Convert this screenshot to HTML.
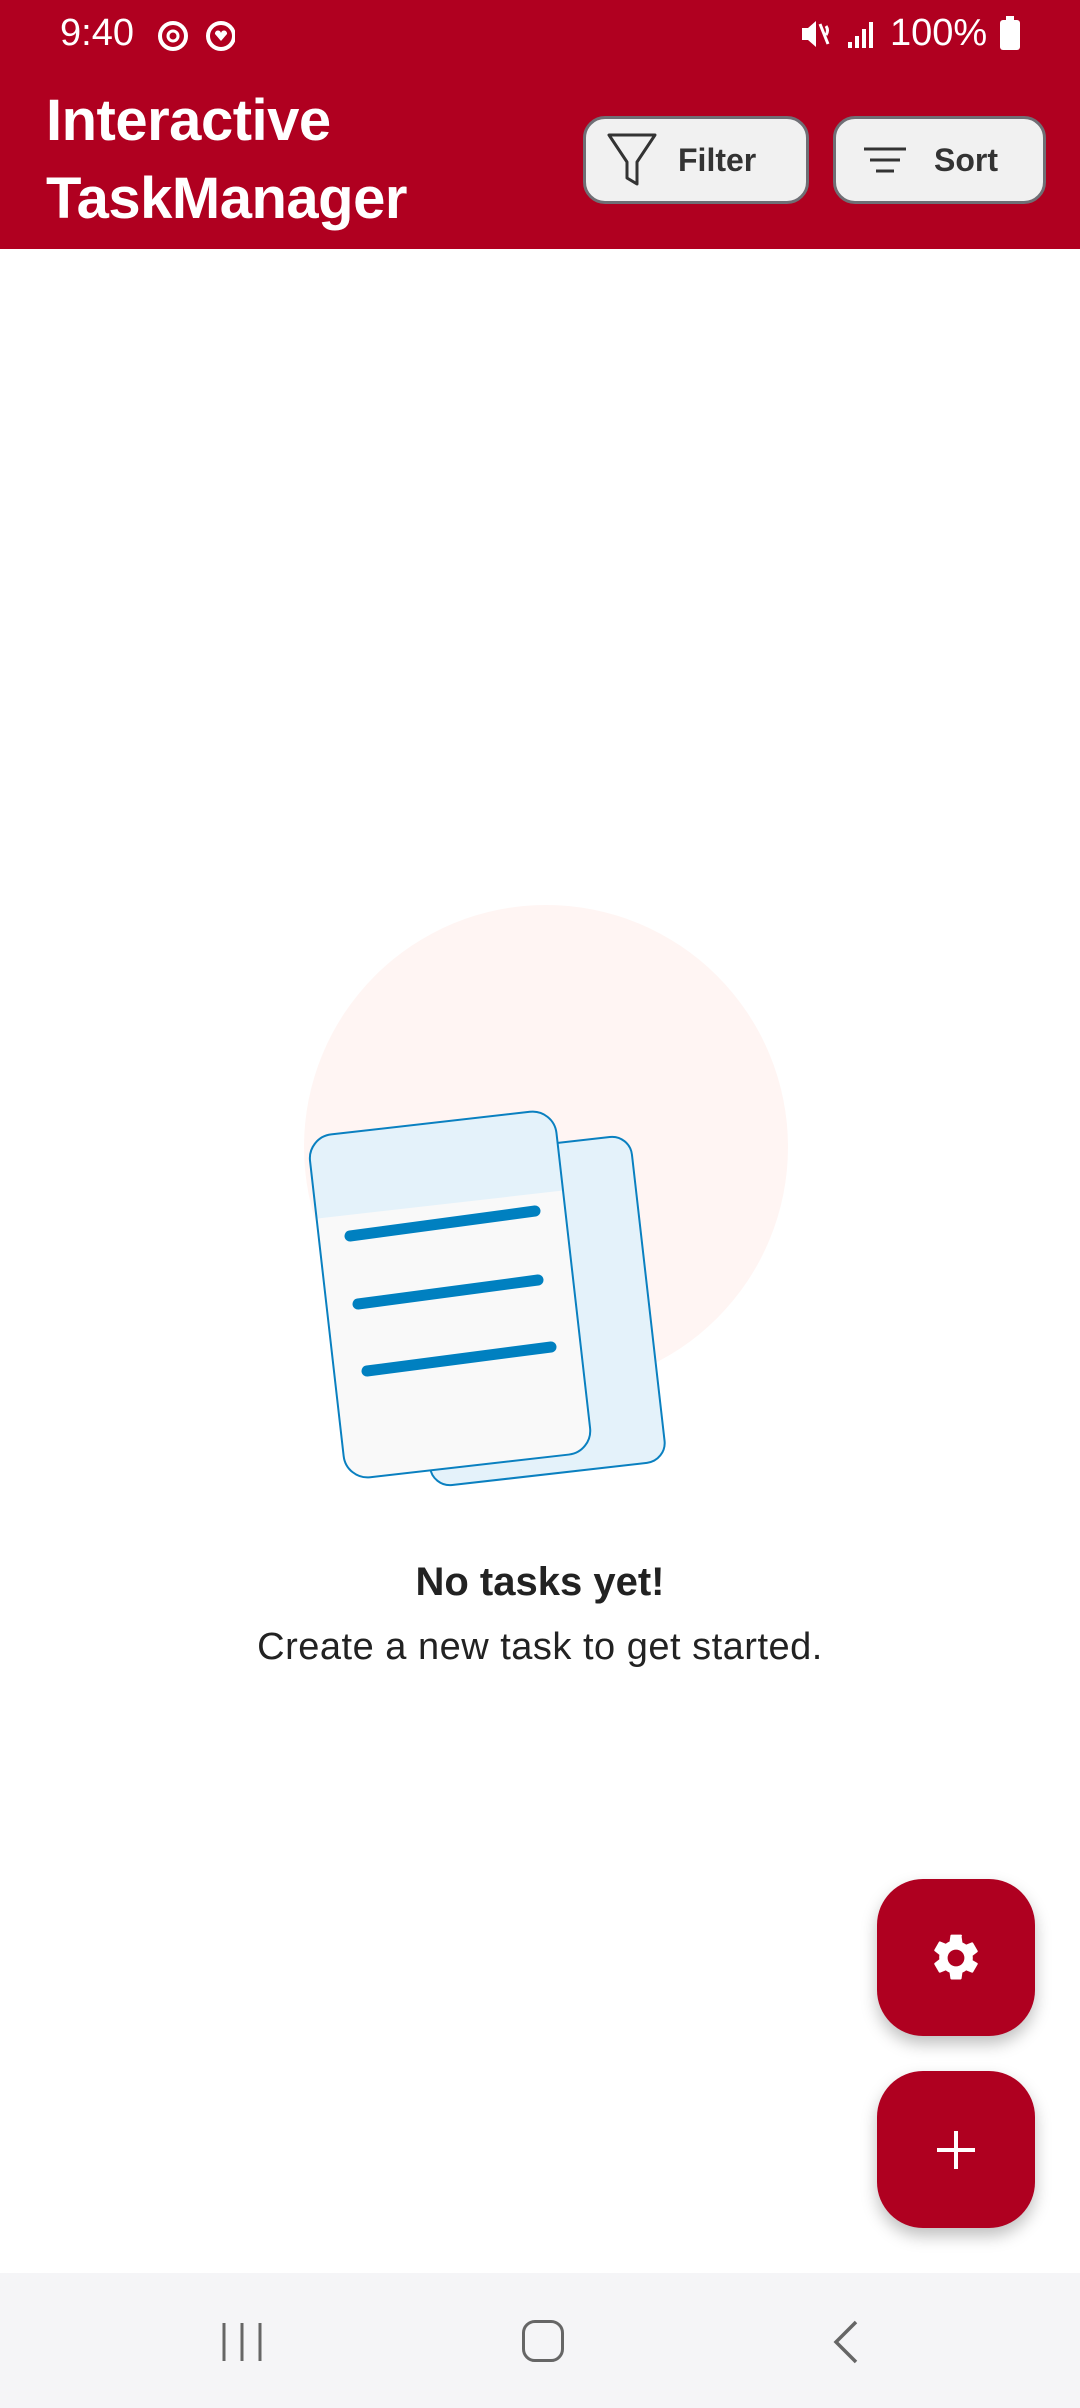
<!DOCTYPE html>
<html><head><meta charset="utf-8"><style>
*{margin:0;padding:0;box-sizing:border-box}
body{width:1080px;height:2408px;position:relative;background:#fff;font-family:"Liberation Sans",sans-serif;overflow:hidden}
.hdr{position:absolute;left:0;top:0;width:1080px;height:249px;background:#B00020}
.st{position:absolute;top:12px;color:#fff;font-size:38px}
.title{position:absolute;left:46px;top:82px;color:#fff;font-size:58px;font-weight:bold;line-height:78px;letter-spacing:-0.5px}
.btn{position:absolute;top:116px;height:88px;background:#f1f1f1;border:3px solid #6f6f75;border-radius:22px;color:#333;font-size:32px;font-weight:bold;display:flex;align-items:center}
.fab{position:absolute;left:877px;width:158px;height:157px;background:#AF0020;border-radius:46px;box-shadow:0 8px 16px rgba(0,0,0,.25);display:flex;align-items:center;justify-content:center}
.nav{position:absolute;left:0;top:2273px;width:1080px;height:135px;background:#f5f5f7}
</style></head><body>
<div class="hdr">
<div class="st" style="left:60px">9:40</div>
<svg style="position:absolute;left:155px;top:18px" width="80" height="36" viewBox="0 0 80 36"><circle cx="18" cy="18" r="13" fill="none" stroke="#fff" stroke-width="4"/><circle cx="18" cy="18" r="5" fill="none" stroke="#fff" stroke-width="3"/><circle cx="66" cy="18" r="13" fill="none" stroke="#fff" stroke-width="4"/><path d="M60 16a3 3 0 0 1 6-1a3 3 0 0 1 6 1l-6 7z" fill="#fff"/></svg>
<svg style="position:absolute;left:800px;top:16px" width="90" height="36" viewBox="0 0 90 36"><path d="M2 12h6l8-7v26l-8-7H2z" fill="#fff"/><path d="M20 8l8 20M26 10c2 3 2 6 0 9" stroke="#fff" stroke-width="3" fill="none"/><rect x="48" y="26" width="4" height="6" fill="#fff"/><rect x="55" y="20" width="4" height="12" fill="#fff"/><rect x="62" y="13" width="4" height="19" fill="#fff"/><rect x="69" y="6" width="4" height="26" fill="#fff"/></svg>
<div class="st" style="left:890px">100%</div>
<div style="position:absolute;left:1000px;top:20px;width:20px;height:30px;background:#fff;border-radius:3px"></div>
<div style="position:absolute;left:1006px;top:16px;width:8px;height:5px;background:#fff"></div>
<div class="title">Interactive<br>TaskManager</div>
<div class="btn" style="left:583px;width:226px"><svg style="margin-left:20px" width="52" height="56" viewBox="0 0 52 56"><path d="M3 3h46L31 30v22l-10-6V30z" fill="none" stroke="#333" stroke-width="3" stroke-linejoin="round"/></svg><span style="margin-left:20px">Filter</span></div>
<div class="btn" style="left:833px;width:213px"><svg style="margin-left:26px" width="46" height="30" viewBox="0 0 46 30"><path d="M2 4h42M8 15h30M14 26h18" stroke="#333" stroke-width="3"/></svg><span style="margin-left:26px">Sort</span></div>
</div>
<svg style="position:absolute;left:0;top:0" width="1080" height="1600">
<circle cx="546" cy="1147" r="242" fill="#FFF5F3"/>
<g transform="rotate(-6.5 531 1311)"><rect x="413" y="1147" width="236" height="328" rx="20" fill="#E4F2FA" stroke="#0A80C0" stroke-width="2"/></g>
<g transform="rotate(-6.5 450 1294)">
<clipPath id="c"><rect x="326" y="1122" width="248" height="345" rx="24"/></clipPath>
<rect x="326" y="1122" width="248" height="345" rx="24" fill="#F9F9F9"/>
<rect x="326" y="1122" width="248" height="82" fill="#E4F2FA" clip-path="url(#c)"/>
<rect x="326" y="1122" width="248" height="345" rx="24" fill="none" stroke="#0A80C0" stroke-width="2"/>
</g>
<g stroke="#0080C0" stroke-width="11" stroke-linecap="round"><path d="M350 1236L535 1211M358 1304L538 1280M367 1371L551 1347"/></g>
</svg>
<div style="position:absolute;left:0;width:1080px;top:1560px;text-align:center;font-size:40px;font-weight:bold;color:#222">No tasks yet!</div>
<div style="position:absolute;left:0;width:1080px;top:1626px;text-align:center;font-size:38px;color:#222;letter-spacing:0.5px">Create a new task to get started.</div>
<div class="fab" style="top:1879px"><svg width="56" height="56" viewBox="0 0 24 24"><path fill="#fff" d="M19.14 12.94c.04-.3.06-.61.06-.94s-.02-.64-.07-.94l2.03-1.58a.49.49 0 0 0 .12-.61l-1.920-3.32a.49.49 0 0 0-.59-.22l-2.39.96c-.5-.38-1.03-.7-1.62-.94l-.36-2.54A.48.48 0 0 0 13.92 2h-3.84c-.24 0-.43.17-.47.41l-.36 2.54c-.59.24-1.130.57-1.620.94l-2.39-.96a.49.49 0 0 0-.59.22L2.74 8.47c-.12.21-.08.47.12.61l2.03 1.58c-.05.3-.09.63-.09.94s.02.64.07.94l-2.03 1.58a.49.49 0 0 0-.12.61l1.92 3.32c.12.22.37.29.59.22l2.39-.96c.5.38 1.03.7 1.62.94l.36 2.54c.05.24.24.41.48.41h3.84c.24 0 .44-.17.47-.41l.36-2.54c.59-.24 1.13-.56 1.62-.94l2.39.96c.22.08.47 0 .59-.22l1.92-3.32c.12-.22.07-.47-.12-.61zM12 15.6A3.6 3.6 0 1 1 12 8.4a3.6 3.6 0 0 1 0 7.2z"/></svg></div>
<div class="fab" style="top:2071px"><svg width="42" height="42" viewBox="0 0 42 42"><path d="M21 2v38M2 21h38" stroke="#fff" stroke-width="4"/></svg></div>
<div class="nav">
<svg style="position:absolute;left:220px;top:48px" width="44" height="42"><path d="M4 2v38M22 2v38M40 2v38" stroke="#666" stroke-width="3"/></svg>
<div style="position:absolute;left:522px;top:47px;width:42px;height:42px;border:3px solid #666;border-radius:13px"></div>
<svg style="position:absolute;left:830px;top:46px" width="30" height="46"><path d="M26 3L6 23l20 20" fill="none" stroke="#666" stroke-width="3.5"/></svg>
</div>
</body></html>
